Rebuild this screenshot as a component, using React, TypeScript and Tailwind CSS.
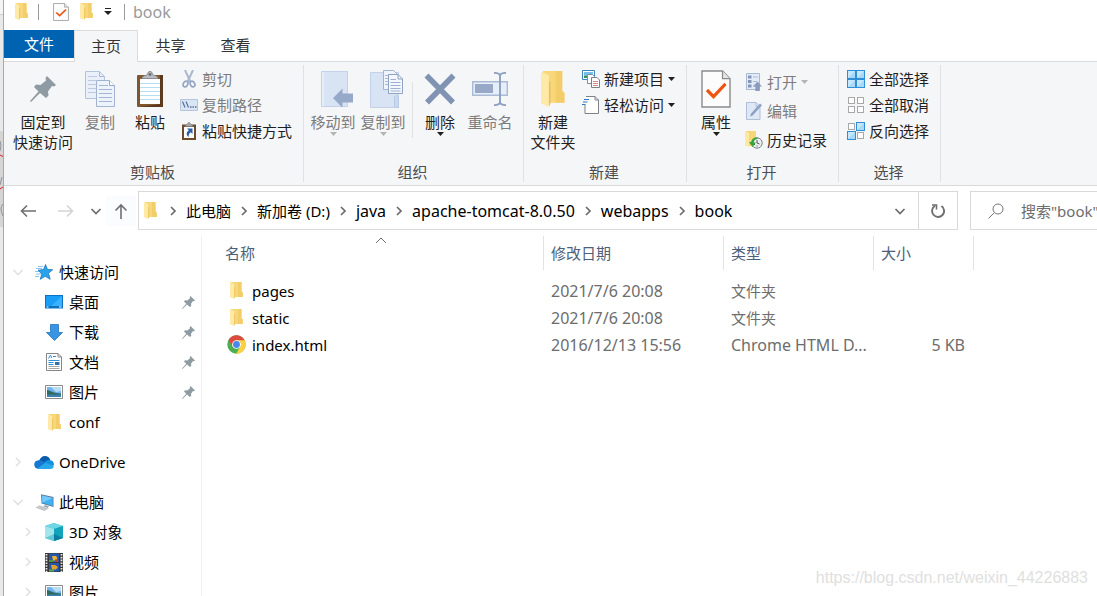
import { ReactNode } from 'react';
import clsx from 'clsx';

/* ---------- icons ---------- */

interface IconProps {
  className?: string;
}

function FolderIcon({ className = 'w-[13px] h-[17px]' }: IconProps) {
  return (
    <svg className={className} viewBox="0 0 13 17" preserveAspectRatio="none" aria-hidden="true">
      <path d="M1 0h10.500v9.500l1.200.8V15H3z" fill="#f7d778" />
      <path d="M8 0h3.500v9.500l1.200.8V15H8z" fill="#f3cd69" />
      <path d="M0 .3 4.300 2v15L0 15.200z" fill="#ffe9a6" />
      <path d="M4.300 5v12l.8-1.800V5z" fill="#e9bf5b" />
    </svg>
  );
}

function CheckDocIcon({ className = 'w-4 h-[18px]' }: IconProps) {
  return (
    <svg className={className} viewBox="0 0 30 37" preserveAspectRatio="none" fill="none" aria-hidden="true">
      <path d="M1 1h20.500l7.500 7.500V36H1z" fill="#fcfcfc" stroke="#8b8b8b" strokeWidth="1.400" />
      <path d="M21.500 1v7.500H29" fill="#e4e4e4" stroke="#8b8b8b" strokeWidth="1.200" />
      <path d="m6 19.500 6.500 6.500L24.500 13.500" stroke="#ee5512" strokeWidth="3.200" />
    </svg>
  );
}

function PinIcon({ className = 'w-[26px] h-[26px]' }: IconProps) {
  return (
    <svg className={className} viewBox="0 0 26 26" fill="#8f9ba3" aria-hidden="true">
      <path d="M17 0l9 9-2 1.500-2-.5-4 5.500.500 4L16 22l-6-5-8.500 8.500L0 26l.5-1.500L8.500 15.500 4 11l2-2.500 4.500.5L16 4.500 15.500 2z" />
    </svg>
  );
}

function CopyIcon() {
  return (
    <svg className="w-[31px] h-9" viewBox="0 0 31 36" fill="none" aria-hidden="true">
      <path d="M.5.5h14l5 5v22H.5z" fill="#e9f0fa" stroke="#b3c3dd" />
      <path d="M14.500.5v5h5" stroke="#a7b9d6" />
      <path d="M3 5.500h9M3 9.500h8M3 13.500h8M3 17.500h8M3 21.500h8" stroke="#bccbe3" />
      <path d="M11.500 9.500h13l5 5v21h-18z" fill="#edf3fb" stroke="#a2b4d2" />
      <path d="M24.500 9.500v5h5" fill="#fff" stroke="#94a8ca" />
      <path d="M14 14.500h9M14 18.500h13M14 22.500h13M14 26.500h13M14 30.500h13" stroke="#a3b5d3" />
    </svg>
  );
}

function PasteIcon() {
  return (
    <svg className="w-[26px] h-9" viewBox="0 0 26 36" fill="none" aria-hidden="true">
      <rect x="0" y="4" width="26" height="32" rx="1" fill="#80562f" />
      <path d="M23 4h3v32H3l20-3z" fill="#5d3a1e" />
      <rect x="3" y="8" width="20" height="25" fill="#fff" />
      <path d="M3 12.500h20M3 16.500h20M3 20.500h20M3 24.500h20M3 28.500h20" stroke="#b4dff2" />
      <path d="M5 7.500c0-3 4-2.500 5.500-4C11 1 11.500.5 13 .5S15 1 15.500 3.500c1.500 1.500 5.500 1 5.500 4z" fill="#b9bcc0" stroke="#8a8c8f" />
      <circle cx="13" cy="3.500" r="1.400" fill="#6c6e70" />
    </svg>
  );
}

function ScissorsIcon() {
  return (
    <svg className="w-4 h-[18px]" viewBox="0 0 16 18" fill="none" aria-hidden="true">
      <path d="M4 0 9.500 12M12 0 6.500 12" stroke="#a9b8cf" strokeWidth="2" />
      <ellipse cx="4.500" cy="14" rx="2.200" ry="3" stroke="#93a5c4" strokeWidth="1.700" transform="rotate(25 4.500 14)" />
      <ellipse cx="11.500" cy="14" rx="2.200" ry="3" stroke="#93a5c4" strokeWidth="1.700" transform="rotate(-25 11.500 14)" />
    </svg>
  );
}

function CopyPathIcon() {
  return (
    <svg className="w-[18px] h-3" viewBox="0 0 18 12" fill="none" aria-hidden="true">
      <path d="M.5.5h17v11H.5z" fill="#d9e4f4" stroke="#b5c4dd" />
      <path d="m2.500 2.500 2.500 6M6 2.500l2.500 6" stroke="#5a6f98" strokeWidth="1.200" />
      <path d="M10 8h1.500M12.500 8H14M15 8h1.500" stroke="#5a6f98" strokeWidth="1.400" />
    </svg>
  );
}

function PasteShortcutIcon() {
  return (
    <svg className="w-[14px] h-[18px]" viewBox="0 0 14 18" fill="none" aria-hidden="true">
      <path d="M0 2.500h14V18H0z" fill="#6e4a2d" />
      <path d="M2 5h10v11H2z" fill="#fff" />
      <path d="M3 4.500C3 3 5 3 5.500 2c.3-1 .7-1.500 1.500-1.500S8.200 1 8.500 2c.5 1 2.500 1 2.500 2.500z" fill="#a4a7aa" stroke="#77797c" strokeWidth=".6" />
      <path d="M5 6.500h5.500V12L8.700 10.200C7 11.500 6.500 13 6.800 15 3.500 13 4.500 9.800 6.800 8.300z" fill="#2c5fa8" />
    </svg>
  );
}

function MoveToIcon() {
  return (
    <svg className="w-[39px] h-9" viewBox="-6 0 39 36" aria-hidden="true">
      <path d="M1.500.5h26v35h-26z" fill="#d8e3f3" stroke="#c3d2e9" />
      <path d="M2 1h2v34H2z" fill="#e6eefa" />
      <path d="M13 27 22.500 17.500v5H33v9H22.500v5.300z" fill="#97a9c8" />
    </svg>
  );
}

function CopyToIcon() {
  return (
    <svg className="w-[39px] h-[38px]" viewBox="-6 0 39 38" fill="none" aria-hidden="true">
      <path d="M.5 2.500h28v35H.5z" fill="#d8e3f3" stroke="#c3d2e9" />
      <path d="M24.500 37.500V27l2-2 2 2v10.500z" fill="#c9d8ed" stroke="#b9cae4" />
      <path d="M13.500.5h10l4 4v15h-14z" fill="#f1f5fb" stroke="#a2b3cf" />
      <path d="M15 5.500h3M15 8.500h3M15 11.500h3M15 14.500h3" stroke="#a9b9d3" />
      <path d="M18.500 4.500h9.500l4.500 4.500v14.500h-14z" fill="#f4f7fc" stroke="#8ea2c3" />
      <path d="M28 4.500V9h4.500" stroke="#8ea2c3" />
      <path d="M20.500 9.500H26M20.500 12.500h10M20.500 15.500h10M20.500 18.500h10M20.500 21h10" stroke="#9eb0cd" />
    </svg>
  );
}

function DeleteIcon() {
  return (
    <svg className="w-8 h-8" viewBox="0 0 32 32" fill="none" aria-hidden="true">
      <path d="M2.500 2.500 29 29.500M29.500 2.500 3 29.500" stroke="#8193b3" strokeWidth="5.600" />
    </svg>
  );
}

function RenameIcon() {
  return (
    <svg className="w-9 h-[34px]" viewBox="0 0 36 34" fill="none" aria-hidden="true">
      <path d="M.7 9.700h34.600v13.600H.7z" fill="#e6eef9" stroke="#a9bad6" strokeWidth="1.400" />
      <path d="M3 12h18v9H3z" fill="#97a9c7" />
      <path d="M28 3v28M22 .9c4 0 6 .6 6 3.100 0-2.500 2-3.100 6-3.100M22 33.100c4 0 6-.6 6-3.100 0 2.500 2 3.100 6 3.100" stroke="#8da0c1" strokeWidth="1.900" />
    </svg>
  );
}

function NewItemIcon() {
  return (
    <svg className="w-[18px] h-[18px]" viewBox="0 0 18 18" fill="none" aria-hidden="true">
      <path d="M.5.5h12v9H.5z" fill="#fff" stroke="#3b86c2" />
      <path d="M2 2h9v3.500H2z" fill="#76bdea" />
      <path d="M2 5.500h9V8H2z" fill="#3f8c68" />
      <path d="M5.500 4.500h5l2 2v7h-7z" fill="#fff" stroke="#7f8c99" />
      <path d="M9.500 7.500H15l2.500 2.500v7.500h-8z" fill="#fff" stroke="#7a7f86" />
      <path d="M11 11.500h5M11 13.500h5M11 15.500h5" stroke="#d08c92" />
    </svg>
  );
}

function EasyAccessIcon() {
  return (
    <svg className="w-[18px] h-[18px]" viewBox="0 0 18 18" fill="none" aria-hidden="true">
      <path d="M4 .5h9l3.500 3.500v13.500H3V9" fill="#fff" stroke="#7d8288" />
      <path d="M13 .5V4h3.500" stroke="#7d8288" />
      <path d="M2 3.500h5M1 6h4.500M0 8.500h3.500" stroke="#2a7ac0" strokeWidth="1.200" />
    </svg>
  );
}

function OpenIcon() {
  return (
    <svg className="w-4 h-[18px]" viewBox="0 0 16 18" fill="none" aria-hidden="true">
      <path d="M.5.5h13v16H.5z" fill="#e3ebf7" stroke="#a9b9d4" />
      <path d="M2 2.500h3.500v3H2zM2 7h3.500v3H2zM2 11.500h3.500v3H2z" fill="#8295b9" />
      <path d="M7 4h5M7 8.500h4M7 13h2" stroke="#a9b9d4" />
      <path d="m11.500 8.500 4.500 5h-2.300V18H9.300v-4.500H7z" fill="#8a9cbd" />
    </svg>
  );
}

function EditIcon() {
  return (
    <svg className="w-4 h-[18px]" viewBox="0 0 16 18" fill="none" aria-hidden="true">
      <path d="M.5.5H10l4 4v13H.5z" fill="#dfe9f6" stroke="#afbfd9" />
      <path d="M10 .5v4h4" stroke="#afbfd9" />
      <path d="m4 14.500.8-2.700L14 1.500l2 1.700-9.300 10.300z" fill="#8fa2c3" />
    </svg>
  );
}

function HistoryIcon() {
  return (
    <svg className="w-[18px] h-[18px]" viewBox="0 0 18 18" fill="none" aria-hidden="true">
      <path d="M1 0h10v10l1 5H3z" fill="#f6d678" />
      <path d="M0 .5 4 2v14L0 14.500z" fill="#ffe8a2" />
      <circle cx="12" cy="12" r="5.200" fill="#eceeef" stroke="#7d8387" />
      <path d="M12 9v3l2.500 1M9 14l1-1M12 15.500v-1" stroke="#4b5256" />
      <path d="M12.500 6.500C9 6 6.500 8 6.300 11H4l3.500 5L11 11.500H8.800c0-2 1.200-3.300 3.700-3.500z" fill="#35a33b" />
    </svg>
  );
}

// filled tells which of the four tiles are drawn as selected
function TilesIcon({ filled }: { filled: boolean[] }) {
  const spots = [[1, 1], [10, 1], [1, 10], [10, 10]];
  return (
    <svg className="w-[18px] h-[18px]" viewBox="0 0 18 18" aria-hidden="true">
      {spots.map(([x, y], i) =>
        filled[i] ? (
          <g key={i}>
            <rect x={x - 1} y={y - 1} width="9" height="9" fill="#2f8ed8" />
            <rect x={x} y={y} width="7" height="7" fill="#a9d9f8" />
            <path d={`M${x} ${y + 7}V${y}h7z`} fill="#c6e7fc" />
          </g>
        ) : (
          <rect key={i} x={x + 0.5} y={y + 0.5} width="6" height="6" fill="#fff" stroke="#a8a8a8" />
        )
      )}
    </svg>
  );
}

function StarIcon() {
  return (
    <svg className="w-[18px] h-4" viewBox="0 0 18 16" aria-hidden="true">
      <path d="M3 2.500h5M1 4.500h6M0 7.500h4M1 10h5M0 12.500h4" stroke="#8cc4ea" />
      <path d="m10.500.5 2 5 5.200.2-4.200 3.600 1.700 6-5-3-5 3 1.700-5.300L3 6.200l5.500-.6z" fill="#2ba3ec" stroke="#1b78c0" strokeWidth=".8" />
    </svg>
  );
}

function DesktopIcon() {
  return (
    <svg className="w-[18px] h-[14px]" viewBox="0 0 18 14" aria-hidden="true">
      <path d="M0 0h18v13.500H0z" fill="#0a72c4" />
      <path d="M1 1h16v10H1z" fill="#1a9df5" />
      <path d="M17 1v10H6z" fill="#3cb1ff" />
      <path d="M1.500 12h2M14 12h2.500" stroke="#fff" />
    </svg>
  );
}

function DownloadIcon() {
  return (
    <svg className="w-[17px] h-[17px]" viewBox="0 0 17 17" aria-hidden="true">
      <path d="M4.500.5h8v8h4l-8 8-8-8h4z" fill="#3a94e4" stroke="#2673b8" strokeWidth=".8" />
    </svg>
  );
}

function DocumentIcon() {
  return (
    <svg className="w-4 h-[18px]" viewBox="0 0 16 18" fill="none" aria-hidden="true">
      <path d="M.5.5H12L15.500 4v13.500H.5z" fill="#fff" stroke="#868686" />
      <path d="M12 .5V4h3.500" stroke="#868686" />
      <path d="m2.500 5.500 2-3.500M5 2.500 5.500 5M7 3.500h3M2.500 7.500h11M2.500 9.500h5M2.500 11.500h5" stroke="#2e8fda" />
      <path d="M9 9h4.500v3H9z" fill="#3470a8" />
      <path d="M2.500 13.500h11M2.500 15.500h11" stroke="#a8a8a8" />
    </svg>
  );
}

function PictureIcon() {
  return (
    <svg className="w-[18px] h-[14px]" viewBox="0 0 18 14" aria-hidden="true">
      <path d="M.5.5h17v13H.5z" fill="#fff" stroke="#8b8b8b" />
      <path d="M2 2h14v10H2z" fill="#72b3ec" />
      <path d="M6 2h10v4l-5 1z" fill="#b9dcf6" />
      <path d="M2 5c3 0 4.500 3 14 3.500V10H2z" fill="#2e6a5e" />
      <path d="M2 9.500h14V12H2z" fill="#3e80ad" />
    </svg>
  );
}

function OneDriveIcon() {
  return (
    <svg className="w-5 h-[13px]" viewBox="0 0 20 13" aria-hidden="true">
      <path d="M5 5C6 2 8 0 11 0c2.500 0 4.500 1.500 5.300 4L10 8z" fill="#0b5cad" />
      <path d="M3 12.500C-1 11-.8 4.500 4.500 4.300c2.500-.3 4 .7 8.500 3.700l-8 5z" fill="#1778d2" />
      <path d="M11 6c1.500-2 3.500-2.500 5.500-1.800C19.500 5 20 7 20 9l-3 2-7-4z" fill="#1490df" />
      <path d="M3 12.700 11.500 6.800 19.800 10c-.3 1.800-1.500 3-3.500 3H4.500C4 13 3.500 12.900 3 12.700z" fill="#28a8ea" />
    </svg>
  );
}

function ComputerIcon() {
  return (
    <svg className="w-[19px] h-[17px]" viewBox="0 0 19 17" aria-hidden="true">
      <path d="M6 .3 18.500 3v10L6.500 9.500z" fill="#5d7b95" />
      <path d="M7 1.500 17.700 4v8L7.300 8.800z" fill="#3fb0f4" />
      <path d="M7 1.500 17.700 4 7.300 8.800z" fill="#72c8fa" />
      <path d="m10 11 4 1.500-1.500 1.500-4-1.500z" fill="#98a4ad" />
      <path d="M0 13.500 4.500 11l9.500 3.500L9.500 17z" fill="#d3d7da" />
      <path d="m2 13.600 8 2.600M4 12.500l8 2.500" stroke="#aab0b5" strokeWidth=".7" />
    </svg>
  );
}

function CubeIcon() {
  return (
    <svg className="w-[18px] h-[18px]" viewBox="0 0 18 18" aria-hidden="true">
      <path d="M0 3 9 0l9 3v12l-9 3-9-3z" fill="#33b9cf" />
      <path d="M0 3 9 0l9 3-9 3z" fill="#6fd6e4" />
      <path d="M0 3v12l9 3V6z" fill="#a3e5ec" />
      <path d="m0 15 9-4v7z" fill="#63c9d6" />
      <path d="M18 3v12l-9 3V6z" fill="#12a3bd" />
      <path d="m18 15-9-4v7z" fill="#0b7fa2" />
    </svg>
  );
}

function VideoIcon() {
  return (
    <svg className="w-[18px] h-[19px]" viewBox="0 0 18 19" aria-hidden="true">
      <path d="M0 0h18v19H0z" fill="#373737" />
      <path d="M1.500 1v18M16.500 1v18" stroke="#e8e8e8" strokeWidth="1.800" strokeDasharray="1.600 1.200" />
      <path d="M4 .5h10v8.500H4zM4 10h10v8.500H4z" fill="#2558ad" />
      <path d="M7 3h4l1.500 2L11 7.500H8z" fill="#e7b52f" />
      <path d="M4 7h4l1 2H4z" fill="#4b9b45" />
      <path d="M10 6.500h3V9h-3z" fill="#c93a2c" />
      <path d="M6 12h4l3 2-2 2.500H7z" fill="#e0a42e" />
      <path d="M4 16.500h5v2H4z" fill="#61a844" />
    </svg>
  );
}

function ChromeIcon() {
  return (
    <svg className="w-[19px] h-[19px]" viewBox="0 0 20 20" aria-hidden="true">
      <circle cx="10" cy="10" r="9.700" fill="#4caf50" />
      <path d="M10 10 1.600 5.200A9.700 9.700 0 0 1 18.400 5.200L18.700 6H10z" fill="#dd4b3e" />
      <path d="M10 5.500h8.600A9.700 9.700 0 0 1 9.600 19.700L14 12.200z" fill="#fbd143" />
      <path d="M1.600 5.200 6 12.400 10 10 9 5.500z" fill="#dd4b3e" />
      <circle cx="10" cy="10" r="4.600" fill="#fff" />
      <circle cx="10" cy="10" r="3.600" fill="#4a86ee" />
    </svg>
  );
}

function Caret({ className = 'text-[#1f1f1f]' }: IconProps) {
  return (
    <svg className={clsx('w-[7px] h-1 shrink-0', className)} viewBox="0 0 7 4" fill="currentColor" aria-hidden="true">
      <path d="M0 0h7L3.500 4z" />
    </svg>
  );
}

interface ChevronProps {
  dir: 'right' | 'down' | 'up';
  className?: string;
}

function Chevron({ dir, className = 'text-[#6b6b6b]' }: ChevronProps) {
  const d = { right: 'M4 2l4 4-4 4', down: 'M1.500 4 6 8.500 10.500 4', up: 'M1 8l5-5 5 5' }[dir];
  return (
    <svg className={clsx('w-3 h-3 shrink-0', className)} viewBox="0 0 12 12" fill="none" stroke="currentColor" strokeWidth={dir === 'up' ? 1 : 1.7} aria-hidden="true">
      <path d={d} />
    </svg>
  );
}

// Latin-only strings are set one step larger than the Chinese ones
function textSize(text: string) {
  return /^[ -~]+$/.test(text) ? 'text-base leading-5' : '';
}

/* ---------- ribbon ---------- */

interface BigButtonProps {
  icon: ReactNode;
  lines: string[];
  disabled?: boolean;
  menu?: boolean;
  className?: string;
}

function BigButton({ icon, lines, disabled, menu, className = 'w-[50px]' }: BigButtonProps) {
  return (
    <button
      type="button"
      disabled={disabled}
      className={clsx('flex flex-col items-center shrink-0 whitespace-nowrap', disabled ? 'text-[#7c7c7c]' : 'text-[#1f1f1f]', className)}
    >
      <span className="flex h-[46px] items-center justify-center">{icon}</span>
      {lines.map((line) => (
        <span key={line} className="leading-5">{line}</span>
      ))}
      {menu && <Caret className={disabled ? 'text-[#b5b5b5]' : 'text-[#1f1f1f]'} />}
    </button>
  );
}

interface SmallButtonProps {
  icon: ReactNode;
  label: string;
  disabled?: boolean;
  menu?: boolean;
  tall?: boolean;
}

function SmallButton({ icon, label, disabled, menu, tall }: SmallButtonProps) {
  return (
    <button
      type="button"
      disabled={disabled}
      className={clsx(
        'flex items-center gap-1 whitespace-nowrap',
        tall ? 'h-[29px]' : 'h-[26px]',
        disabled ? 'text-[#7c7c7c]' : 'text-[#1f1f1f]'
      )}
    >
      <span className="flex w-[18px] justify-center">{icon}</span>
      <span>{label}</span>
      {menu && <Caret className={disabled ? 'text-[#b5b5b5]' : 'text-[#1f1f1f]'} />}
    </button>
  );
}

interface GroupProps {
  title: string;
  className: string;
  pad?: string;
  children: ReactNode;
}

function RibbonGroup({ title, className, pad = 'pl-1', children }: GroupProps) {
  return (
    <section className={clsx('my-[3px] flex shrink-0 flex-col justify-between border-r border-[#dfe1e4]', className)}>
      <div className={clsx('flex items-start pt-px', pad)}>{children}</div>
      <h2 className="pr-0.5 text-center leading-5 text-[#4d4d4d]">{title}</h2>
    </section>
  );
}

function Ribbon() {
  return (
    <div className="flex h-[124px] shrink-0 overflow-hidden border-b border-[#d9dadc] bg-[#f5f6f8]">
      <RibbonGroup title="剪贴板" className="w-[300px]" pad="pl-[7px]">
        <BigButton icon={<PinIcon />} lines={['固定到', '快速访问']} className="w-16" />
        <BigButton icon={<CopyIcon />} lines={['复制']} disabled />
        <BigButton icon={<PasteIcon />} lines={['粘贴']} />
        <div className="ml-[5px]">
          <SmallButton icon={<ScissorsIcon />} label="剪切" disabled />
          <SmallButton icon={<CopyPathIcon />} label="复制路径" disabled />
          <SmallButton icon={<PasteShortcutIcon />} label="粘贴快捷方式" />
        </div>
      </RibbonGroup>
      <RibbonGroup title="组织" className="w-[220px]">
        <BigButton icon={<MoveToIcon />} lines={['移动到']} disabled menu />
        <BigButton icon={<CopyToIcon />} lines={['复制到']} disabled menu />
        <div className="ml-1 mr-0.5 mt-4 h-14 w-px bg-[#dfe1e4]" />
        <BigButton icon={<DeleteIcon />} lines={['删除']} menu />
        <BigButton icon={<RenameIcon />} lines={['重命名']} disabled />
      </RibbonGroup>
      <RibbonGroup title="新建" className="w-[163px]">
        <BigButton icon={<FolderIcon className="w-6 h-9" />} lines={['新建', '文件夹']} />
        <div className="ml-1">
          <SmallButton icon={<NewItemIcon />} label="新建项目" menu />
          <SmallButton icon={<EasyAccessIcon />} label="轻松访问" menu />
        </div>
      </RibbonGroup>
      <RibbonGroup title="打开" className="w-[152px]">
        <BigButton icon={<CheckDocIcon className="w-[30px] h-[38px]" />} lines={['属性']} menu />
        <div className="ml-1 mt-px">
          <SmallButton icon={<OpenIcon />} label="打开" disabled menu tall />
          <SmallButton icon={<EditIcon />} label="编辑" disabled tall />
          <SmallButton icon={<HistoryIcon />} label="历史记录" tall />
        </div>
      </RibbonGroup>
      <RibbonGroup title="选择" className="w-[102px]" pad="pl-2">
        <div>
          <SmallButton icon={<TilesIcon filled={[true, true, true, true]} />} label="全部选择" />
          <SmallButton icon={<TilesIcon filled={[false, false, false, false]} />} label="全部取消" />
          <SmallButton icon={<TilesIcon filled={[false, true, true, false]} />} label="反向选择" />
        </div>
      </RibbonGroup>
    </div>
  );
}

/* ---------- title, tabs, address ---------- */

function TitleBar() {
  return (
    <header className="flex h-[30px] shrink-0 items-center pb-[7px] pl-[11px]">
      <FolderIcon />
      <span className="ml-[10px] h-4 w-px bg-[#9a9a9a]" />
      <button type="button" aria-label="属性" className="ml-[14px]">
        <CheckDocIcon />
      </button>
      <button type="button" aria-label="新建文件夹" className="ml-[11px]">
        <FolderIcon />
      </button>
      <button type="button" aria-label="自定义" className="ml-[11px]">
        <svg className="w-2 h-[7px]" viewBox="0 0 8 7" aria-hidden="true">
          <path d="M1 .5h6" stroke="#222" />
          <path d="M0 3h8L4 7z" fill="#222" />
        </svg>
      </button>
      <span className="ml-3 h-4 w-px bg-[#9a9a9a]" />
      <h1 className="ml-2 text-base leading-5 text-[#999]">book</h1>
    </header>
  );
}

function Tabs() {
  return (
    <nav className="flex h-8 shrink-0 text-[#333]">
      <div className="w-[70px] border-b border-[#dadbdc] pb-[3px]">
        <button type="button" className="h-7 w-full bg-[#0063b1] text-white">文件</button>
      </div>
      <button type="button" className="w-16 border border-b-0 border-[#dadbdc] bg-[#f5f6f8] pb-0.5">主页</button>
      <button type="button" className="w-[65px] border-b border-[#dadbdc] pb-0.5">共享</button>
      <button type="button" className="w-[65px] border-b border-[#dadbdc] pb-0.5">查看</button>
      <div className="flex-1 border-b border-[#dadbdc]" />
    </nav>
  );
}

const crumbs = ['此电脑', '新加卷 (D:)', 'java', 'apache-tomcat-8.0.50', 'webapps', 'book'];

function Arrow({ dir, className }: { dir: 'left' | 'right' | 'up'; className: string }) {
  const d = {
    left: 'M16 8H1.500M7 2.500 1.500 8 7 13.500',
    right: 'M0 8h14.500M9 2.500l5.500 5.500L9 13.500',
    up: 'M8 16V2M2.500 7.500 8 2l5.500 5.500',
  }[dir];
  return (
    <svg className={clsx('w-4 h-4', className)} viewBox="0 0 16 16" fill="none" stroke="currentColor" strokeWidth="1.600" aria-hidden="true">
      <path d={d} />
    </svg>
  );
}

function AddressBar() {
  return (
    <div className="flex h-11 shrink-0 items-end">
      <div className="flex h-[39px] w-[134px] shrink-0 items-center pl-4">
        <button type="button" aria-label="后退">
          <Arrow dir="left" className="text-[#6f6f6f]" />
        </button>
        <button type="button" aria-label="前进" className="ml-[22px]">
          <Arrow dir="right" className="text-[#d4d4d4]" />
        </button>
        <button type="button" aria-label="最近浏览的位置" className="ml-4">
          <Chevron dir="down" />
        </button>
        <button type="button" aria-label="上移" className="ml-1 flex h-[30px] w-[30px] items-center justify-center bg-[#fafcff]">
          <Arrow dir="up" className="text-[#6f6f6f]" />
        </button>
      </div>
      <div className="flex h-[39px] min-w-0 flex-1 items-center border border-[#d9d9d9]">
        <span className="pl-[5px]">
          <FolderIcon />
        </span>
        <nav className="flex min-w-0 flex-1 items-center whitespace-nowrap pl-[3px] text-black">
          {crumbs.map((crumb) => (
            <span key={crumb} className="flex items-center">
              <span className="flex w-[26px] justify-center">
                <Chevron dir="right" />
              </span>
              <button type="button" className={textSize(crumb)}>{crumb}</button>
            </span>
          ))}
        </nav>
        <button type="button" aria-label="以前的位置" className="flex w-9 justify-center">
          <Chevron dir="down" />
        </button>
        <button type="button" aria-label="刷新" className="flex h-full w-[39px] items-center justify-center border-l border-[#d9d9d9]">
          <svg className="w-[14px] h-[15px]" viewBox="0 0 14 15" fill="none" stroke="#6f6f6f" strokeWidth="1.900" aria-hidden="true">
            <path d="M10.500 3A6 6 0 1 1 4 2.800" />
            <path d="M1 2h4.500v4.500" strokeWidth="1.600" />
          </svg>
        </button>
      </div>
      <label className="ml-3 flex h-[39px] w-[127px] shrink-0 items-center border border-r-0 border-[#d9d9d9] pl-[17px]">
        <svg className="w-4 h-4 shrink-0" viewBox="0 0 16 16" fill="none" stroke="#767676" aria-hidden="true">
          <circle cx="10" cy="6" r="5" />
          <path d="M6.500 9.500.5 15.500" />
        </svg>
        <input
          type="text"
          aria-label="搜索"
          placeholder={'搜索"book"'}
          className="ml-[17px] w-0 flex-1 outline-none placeholder:text-[#6d6d6d]"
        />
      </label>
    </div>
  );
}

/* ---------- navigation pane ---------- */

interface TreeItem {
  label: string;
  icon: ReactNode;
  child?: boolean;
  pinned?: boolean;
  chevron?: 'right' | 'down';
}

const tree: TreeItem[][] = [
  [
    { label: '快速访问', icon: <StarIcon />, chevron: 'down' },
    { label: '桌面', icon: <DesktopIcon />, child: true, pinned: true },
    { label: '下载', icon: <DownloadIcon />, child: true, pinned: true },
    { label: '文档', icon: <DocumentIcon />, child: true, pinned: true },
    { label: '图片', icon: <PictureIcon />, child: true, pinned: true },
    { label: 'conf', icon: <FolderIcon />, child: true },
  ],
  [{ label: 'OneDrive', icon: <OneDriveIcon />, chevron: 'right' }],
  [
    { label: '此电脑', icon: <ComputerIcon />, chevron: 'down' },
    { label: '3D 对象', icon: <CubeIcon />, child: true, chevron: 'right' },
    { label: '视频', icon: <VideoIcon />, child: true, chevron: 'right' },
    { label: '图片', icon: <PictureIcon />, child: true, chevron: 'right' },
  ],
];

function Sidebar() {
  return (
    <aside className="mt-[6px] flex w-[198px] shrink-0 flex-col gap-[10px] overflow-hidden border-r border-[#f0f0f0] pt-[21px] text-black">
      {tree.map((section) => (
        <ul key={section[0].label}>
          {section.map((item) => (
            <li key={item.label}>
              <a href="#" className={clsx('flex h-[30px] items-center pr-[6px]', item.child ? 'pl-[18px]' : 'pl-2')}>
                <span className="w-3 shrink-0">
                  {item.chevron && <Chevron dir={item.chevron} className="text-[#e2e2e2]" />}
                </span>
                <span className="ml-[10px] mr-[5px] flex w-5 shrink-0 justify-center">{item.icon}</span>
                <span className="flex-1">{item.label}</span>
                {item.pinned && <PinIcon className="w-[13px] h-[13px]" />}
              </a>
            </li>
          ))}
        </ul>
      ))}
    </aside>
  );
}

/* ---------- file list ---------- */

const files = [
  { name: 'pages', icon: <FolderIcon />, date: '2021/7/6 20:08', type: '文件夹', size: '' },
  { name: 'static', icon: <FolderIcon />, date: '2021/7/6 20:08', type: '文件夹', size: '' },
  { name: 'index.html', icon: <ChromeIcon />, date: '2016/12/13 15:56', type: 'Chrome HTML D...', size: '5 KB' },
];

const columns = [
  { label: '名称', width: 'w-[342px]', pad: 'pl-[23px]', sorted: true },
  { label: '修改日期', width: 'w-[180px]', pad: 'pl-[7px]' },
  { label: '类型', width: 'w-[150px]', pad: 'pl-[7px]' },
  { label: '大小', width: 'w-[100px]', pad: 'pl-[7px]' },
];

function FileList() {
  return (
    <main className="min-w-0 flex-1 overflow-hidden pt-[6px]">
      <table className="w-[772px] table-fixed border-collapse text-left">
        <thead>
          <tr>
            {columns.map((col) => (
              <th key={col.label} className={clsx('p-0 pb-[7px] font-normal', col.width)}>
                <div className={clsx('relative flex h-[34px] items-center border-r border-[#e3e3e3] text-[#4c607a]', col.pad)}>
                  {col.label}
                  {col.sorted && (
                    <span className="absolute inset-x-0 -top-px flex justify-center pl-4">
                      <Chevron dir="up" />
                    </span>
                  )}
                </div>
              </th>
            ))}
          </tr>
        </thead>
        <tbody>
          {files.map((file) => (
            <tr key={file.name} className="h-[27px] text-[#6d6d6d]">
              <td className="p-0 pl-6">
                <a href="#" className="flex items-center gap-[6px] text-black">
                  <span className="flex w-5 justify-center">{file.icon}</span>
                  {file.name}
                </a>
              </td>
              <td className={clsx('p-0 pl-[7px]', textSize(file.date))}>{file.date}</td>
              <td className={clsx('p-0 pl-[7px] whitespace-nowrap', textSize(file.type))}>{file.type}</td>
              <td className={clsx('p-0 pr-[9px] text-right', textSize(file.size))}>{file.size}</td>
            </tr>
          ))}
        </tbody>
      </table>
    </main>
  );
}

// sliver of the window behind the explorer
function BackdropEdge() {
  return (
    <div className="flex w-1 shrink-0 flex-col border-r border-[#a8a8a8] bg-[#e9e9e9]">
      <div className="h-[15px] border-b border-[#d0d0d0] bg-[#f4f4f4]" />
      <div className="h-[116px]" />
      <div className="h-24 bg-[#d6d5d4]">
        <svg className="w-[3px] h-24" viewBox="0 0 3 96" fill="none" aria-hidden="true">
          <path d="m0 24 3 1.500M0 58l3-2" stroke="#e81b1b" />
          <path d="M0 10q2 4 0 10M2 46 0 54M3 73q-4 4 0 12" stroke="#8c93a0" />
        </svg>
      </div>
    </div>
  );
}

export default function App() {
  return (
    <div className="relative flex h-screen overflow-hidden bg-white font-['Noto_Sans','Noto_Sans_CJK_SC',sans-serif] text-[15px] leading-5">
      <BackdropEdge />
      <div className="flex min-w-0 flex-1 flex-col">
        <TitleBar />
        <Tabs />
        <Ribbon />
        <AddressBar />
        <div className="flex min-h-0 flex-1">
          <Sidebar />
          <FileList />
        </div>
      </div>
      <p className="absolute bottom-[6px] right-[9px] font-['Liberation_Sans',sans-serif] text-base text-[#e0e0e0]">
        https://blog.csdn.net/weixin_44226883
      </p>
    </div>
  );
}
